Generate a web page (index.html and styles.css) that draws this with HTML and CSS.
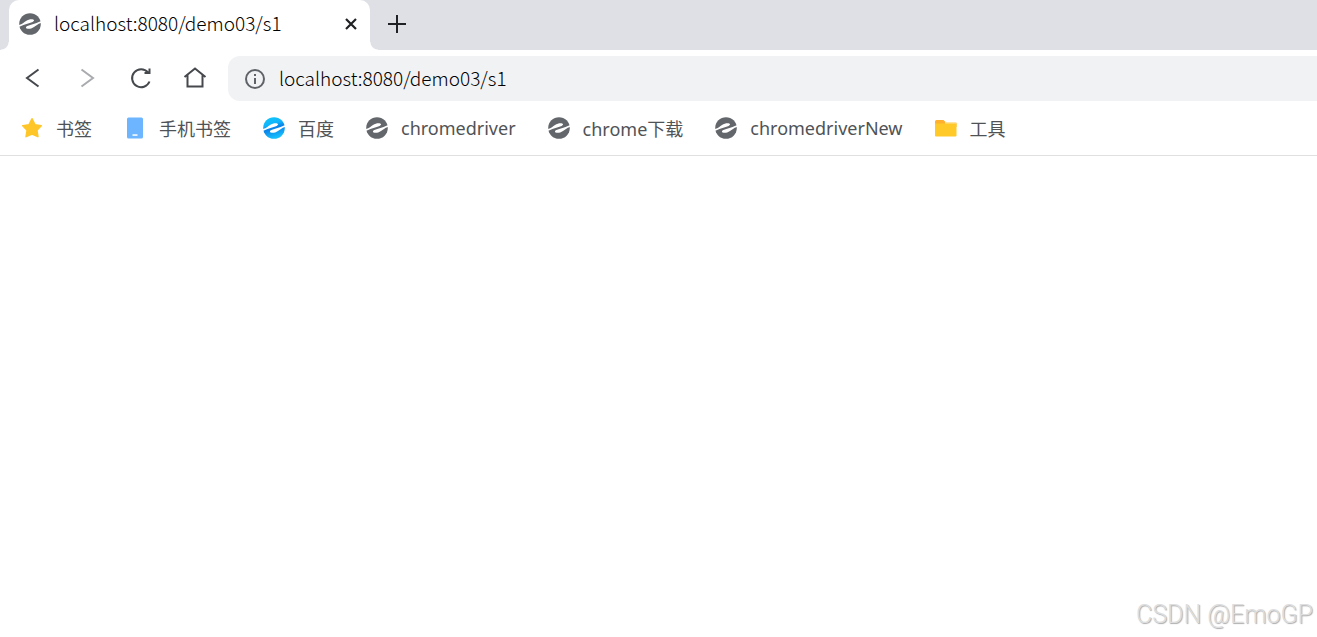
FILE: index.html
```
<!DOCTYPE html>
<html lang="zh-CN">
<head>
<meta charset="utf-8" />
<meta name="viewport" content="width=device-width, initial-scale=1" />
<title>localhost:8080/demo03/s1</title>
<link rel="stylesheet" href="styles.css">
</head>
<body>
<svg class="defs" aria-hidden="true">
  <defs>
    <linearGradient id="blue" x1="0" y1="0" x2="0.3" y2="1">
      <stop offset="0" stop-color="#12c8fa" />
      <stop offset="0.4" stop-color="#10b4fb" />
      <stop offset="0.6" stop-color="#0a80e8" />
      <stop offset="1" stop-color="#16bcfb" />
    </linearGradient>
    <symbol id="logo" viewBox="0 0 22 22">
      <circle cx="11" cy="11" r="10.8" />
      <path fill="#fff" d="M-1 12.4C3 11.4 4.8 9.6 7 8C9.4 6.3 12.4 5.8 14.2 6.4C15.6 6.9 15.2 8.2 13.6 8.9C10 10.4 5 11.4 1.6 13.2L-1 14Z" />
      <path fill="#fff" d="M23 9.6C19 10.6 17.2 12.4 15 14C12.6 15.7 9.6 16.2 7.8 15.6C6.4 15.1 6.8 13.8 8.4 13.1C12 11.6 17 10.6 20.4 8.8L23 8Z" />
    </symbol>
  </defs>
</svg>
<header class="browser">
  <div class="tabs">
    <div class="tab">
      <svg class="icon gray"><use href="#logo" /></svg>
      <span class="tab-title">localhost:8080/demo03/s1</span>
      <button class="close" aria-label="关闭标签页">
        <svg width="12" height="12" viewBox="0 0 12 12"><path d="M1 1L11 11M11 1L1 11" stroke="#202124" stroke-width="2.2" /></svg>
      </button>
    </div>
    <button class="new-tab" aria-label="新建标签页">
      <svg width="18" height="18" viewBox="0 0 18 18"><path d="M9 0V18M0 9H18" stroke="#202124" stroke-width="2" /></svg>
    </button>
  </div>
  <div class="toolbar">
    <button class="nav" aria-label="后退">
      <svg width="24" height="24" viewBox="0 0 24 24"><path d="M17.5 2.5L6 11L17.5 19.5" /></svg>
    </button>
    <button class="nav" aria-label="前进" disabled>
      <svg width="24" height="24" viewBox="0 0 24 24"><path d="M6.5 2.5L18 11L6.5 19.5" /></svg>
    </button>
    <button class="nav" aria-label="刷新">
      <svg width="24" height="24" viewBox="0 0 24 24"><path d="M19 5.4A9 9 0 1 0 20.5 14.5M20.5 1.5V6H15.5" /></svg>
    </button>
    <button class="nav" aria-label="主页">
      <svg width="24" height="24" viewBox="0 0 24 24"><path d="M1.5 10L12 1.5L22.5 10M4.5 8V19.5H19.5V8" /></svg>
    </button>
    <label class="address">
      <svg width="20" height="20" viewBox="0 0 20 20"><circle cx="10" cy="10" r="9" fill="none" stroke="#5f6368" stroke-width="2" /><path d="M10 5V7M10 9V15" stroke="#5f6368" stroke-width="2" /></svg>
      <input type="text" value="localhost:8080/demo03/s1" aria-label="地址栏" />
    </label>
  </div>
  <nav class="bookmarks">
    <a href="#">
      <svg class="icon" viewBox="0 0 22 22"><path d="M11 1.8L14 7.8L20.2 8.7L15.9 13.3L16.9 19.6L11 16.9L5.1 19.6L6.1 13.3L1.8 8.7L8 7.8Z" fill="#ffc629" stroke="#ffc629" stroke-width="1.6" stroke-linejoin="round" /></svg>
      书签
    </a>
    <a href="#">
      <svg class="icon" viewBox="0 0 22 22"><rect x="3" y="0.5" width="16" height="21" rx="1.5" fill="#6db6ff" /><rect x="8.5" y="17.3" width="5" height="1.5" fill="#fff" /></svg>
      手机书签
    </a>
    <a href="#"><svg class="icon" fill="url(#blue)"><use href="#logo" /></svg>百度</a>
    <a href="#"><svg class="icon gray"><use href="#logo" /></svg>chromedriver</a>
    <a href="#"><svg class="icon gray"><use href="#logo" /></svg>chrome下载</a>
    <a href="#"><svg class="icon gray"><use href="#logo" /></svg>chromedriverNew</a>
    <a href="#">
      <svg class="icon" viewBox="0 0 22 22"><path d="M0 4.5Q0 3 1.5 3H8.5L10.5 5H20.5Q21.5 5 21.5 6.5V10H0Z" fill="#ffb02e" /><path d="M10 5H21V7H10Z" fill="#ffe3a0" /><path d="M0 6.5H21.5V18.5Q21.5 19.5 20.5 19.5H1Q0 19.5 0 18.5Z" fill="#ffc928" /></svg>
      工具
    </a>
  </nav>
</header>
<main class="page">
  <div class="watermark">CSDN @EmoGP</div>
</main>
</body>
</html>
```
FILE: styles.css
```
:root {
  --strip: #dfe0e6;
  --field: #f1f2f4;
  --icon: #45484c;
  --logo: #63676c;
}
*{box-sizing:border-box;}
body{
  margin:0;
  min-height:100vh;
  display:flex;
  flex-direction:column;
  overflow:hidden;
  background:#fff;
  color:#000;
  font-family:'Noto Sans CJK SC',sans-serif;
}
button{
  display:flex;
  align-items:center;
  justify-content:center;
  padding:0;
  border:none;
  background:none;
}
svg{display:block;flex:none;}
.defs{position:absolute;width:0;height:0;}
.icon{width:22px;height:22px;}
.gray{fill:var(--logo);}

.tabs{
  display:flex;
  height:50px;
  padding-left:9px;
  background:var(--strip);
}
.tab{
  position:relative;
  display:flex;
  align-items:center;
  width:361px;
  padding:0 12px 2px 10px;
  gap:13px;
  border-radius:10px 10px 0 0;
  background:#fff;
  font-size:19px;
  font-weight:300;
}
.tab::before,
.tab::after{
  content:'';
  position:absolute;
  bottom:0;
  width:8px;
  height:8px;
}
.tab::before{left:-8px;background:radial-gradient(circle at 0 0,transparent 7px,#fff 8px);}
.tab::after{right:-8px;background:radial-gradient(circle at 100% 0,transparent 7px,#fff 8px);}
.tab-title{flex:1;padding-bottom:4px;white-space:nowrap;}
.close{width:14px;height:22px;}
.new-tab{width:18px;height:48px;margin-left:18px;}

.toolbar{
  display:flex;
  align-items:center;
  padding:6px 0 0 6px;
}
.nav{width:54px;height:44px;}
.nav path{fill:none;stroke:var(--icon);stroke-width:2;}
.nav:disabled path{stroke:#a9abae;}
.address{
  flex:1;
  display:flex;
  align-items:center;
  gap:14px;
  height:45px;
  margin-left:6px;
  padding-left:17px;
  border-radius:12px 0 0 12px;
  background:var(--field);
}
.address input{
  flex:1;
  padding:0 0 2px;
  border:none;
  outline:none;
  background:none;
  color:inherit;
  font:inherit;
  font-size:19px;
  font-weight:300;
}

.bookmarks{
  display:flex;
  align-items:center;
  gap:32px;
  height:55px;
  padding-left:21px;
  border-bottom:1px solid #e0e0e1;
}
.bookmarks a{
  display:flex;
  align-items:center;
  gap:13px;
  color:#505356;
  font-family:'Noto Sans','Noto Sans CJK SC',sans-serif;
  font-size:18px;
  text-decoration:none;
  white-space:nowrap;
}

.page{
  flex:1;
  display:flex;
  align-items:flex-end;
  justify-content:flex-end;
  padding:0 4px 8px 0;
}
.watermark{
  color:#dedede;
  font-family:Roboto,sans-serif;
  font-size:25px;
  font-weight:300;
  text-shadow:1px 1px 1px #aaa;
}
```
